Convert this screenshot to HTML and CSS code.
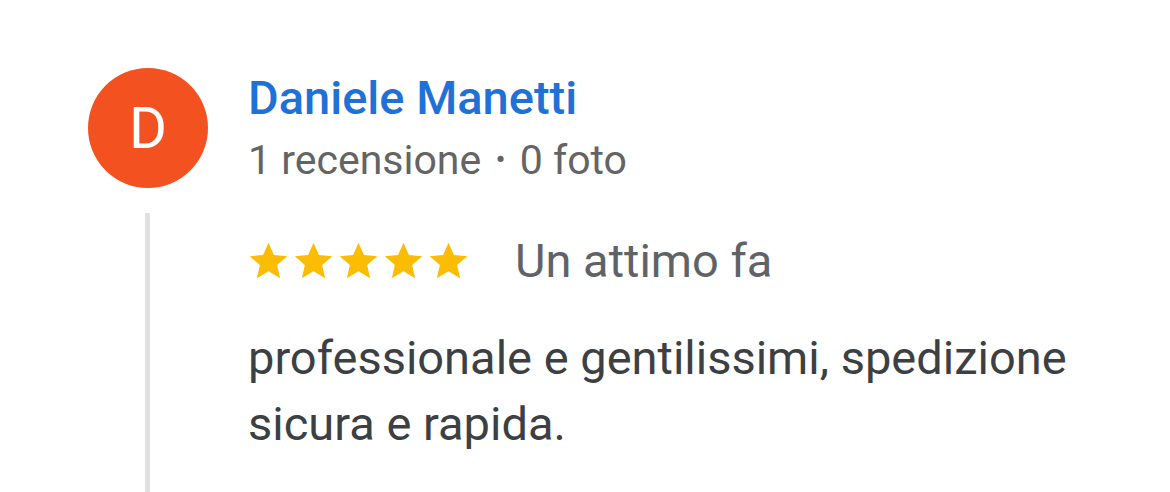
FILE: index.html
```html
<!DOCTYPE html>
<html lang="it">
<head>
    <meta charset="UTF-8">
    <meta name="viewport" content="width=device-width, initial-scale=1.0">
    <title>Recensione</title>
    <link rel="stylesheet" href="styles.css">
</head>
<body>
    <div class="review">
        <div class="author">
            <div class="avatar">D</div>
            <div class="info">
                <div class="name">Daniele Manetti</div>
                <div class="meta">1 recensione <span class="dot">•</span> 0 foto</div>
            </div>
        </div>

        <div class="thread">
            <div class="rating">
                <div class="stars">
                    <svg viewBox="0 0 24 24"><path d="M12 2.5l2.9 6.6 7.1.6-5.4 4.7 1.6 7-6.2-3.7-6.2 3.7 1.6-7L2 9.7l7.1-.6z"/></svg>
                    <svg viewBox="0 0 24 24"><path d="M12 2.5l2.9 6.6 7.1.6-5.4 4.7 1.6 7-6.2-3.7-6.2 3.7 1.6-7L2 9.7l7.1-.6z"/></svg>
                    <svg viewBox="0 0 24 24"><path d="M12 2.5l2.9 6.6 7.1.6-5.4 4.7 1.6 7-6.2-3.7-6.2 3.7 1.6-7L2 9.7l7.1-.6z"/></svg>
                    <svg viewBox="0 0 24 24"><path d="M12 2.5l2.9 6.6 7.1.6-5.4 4.7 1.6 7-6.2-3.7-6.2 3.7 1.6-7L2 9.7l7.1-.6z"/></svg>
                    <svg viewBox="0 0 24 24"><path d="M12 2.5l2.9 6.6 7.1.6-5.4 4.7 1.6 7-6.2-3.7-6.2 3.7 1.6-7L2 9.7l7.1-.6z"/></svg>
                </div>
                <span class="when">Un attimo fa</span>
            </div>
            <p class="text">professionale e gentilissimi, spedizione<br>sicura e rapida.</p>
        </div>
    </div>
</body>
</html>
```

FILE: styles.css
```css
body {
    margin: 0;
    background-color: #fff;
    font-family: Roboto, "Noto Sans", sans-serif;
    overflow: hidden;
}
.review {
    padding: 68px 0 0 88px;
}
.author {
    display: flex;
    align-items: flex-start;
    gap: 40px;
}
.avatar {
    width: 120px;
    height: 120px;
    border-radius: 50%;
    background-color: #f3511f;
    color: #fff;
    font-size: 58px;
    display: flex;
    align-items: center;
    justify-content: center;
}
.info {
    padding-top: 7px;
}
.name {
    color: #1f71d8;
    font-size: 47px;
    font-weight: 500;
    line-height: 46px;
}
.meta {
    color: #646464;
    font-size: 41px;
    line-height: 48px;
    margin-top: 15px;
}
.meta .dot {
    font-size: 30px;
    vertical-align: 4px;
    margin: 0 4px;
}
.thread {
    margin: 25px 0 0 57px;
    border-left: 5px solid #dfe1e4;
    padding: 20px 0 40px 98px;
}
.rating {
    display: flex;
    align-items: center;
    gap: 44px;
}
.stars {
    display: flex;
    margin-left: -2px;
}
.stars svg {
    width: 45px;
    height: 45px;
    fill: #fbbc04;
}
.when {
    color: #5f6368;
    font-size: 47px;
}
.text {
    margin: 37px 0 0;
    color: #3c4043;
    font-size: 47px;
    line-height: 66px;
}
```
